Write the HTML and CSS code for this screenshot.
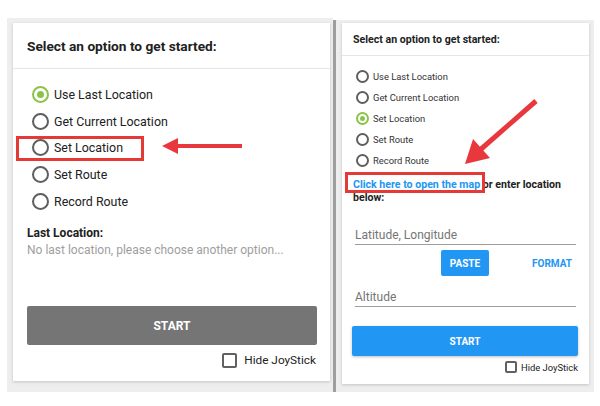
FILE: index.html
```html
<!DOCTYPE html>
<html lang="en">
<head>
    <meta charset="UTF-8">
    <meta name="viewport" content="width=device-width, initial-scale=1.0">
    <title>Set Location Guide</title>
    <link rel="stylesheet" href="styles.css">
</head>
<body>
    <div class="shots">
        <div class="panel panel-left">
            <div class="card">
                <div class="card-header">Select an option to get started:</div>
                <div class="options">
                    <div class="option"><span class="radio checked"></span>Use Last Location</div>
                    <div class="option"><span class="radio"></span>Get Current Location</div>
                    <div class="option"><span class="radio"></span>Set Location</div>
                    <div class="option"><span class="radio"></span>Set Route</div>
                    <div class="option"><span class="radio"></span>Record Route</div>
                </div>
                <div class="last-title">Last Location:</div>
                <div class="last-text">No last location, please choose another option...</div>
                <div class="spacer"></div>
                <button class="start start-gray">START</button>
                <div class="joystick"><span class="check"></span>Hide JoyStick</div>
            </div>
        </div>
        <div class="divider"></div>
        <div class="panel panel-right">
            <div class="card">
                <div class="card-header">Select an option to get started:</div>
                <div class="options">
                    <div class="option"><span class="radio"></span>Use Last Location</div>
                    <div class="option"><span class="radio"></span>Get Current Location</div>
                    <div class="option"><span class="radio checked"></span>Set Location</div>
                    <div class="option"><span class="radio"></span>Set Route</div>
                    <div class="option"><span class="radio"></span>Record Route</div>
                </div>
                <div class="map-line"><span class="map-link">Click here to open the map</span> or enter location below:</div>
                <div class="field">Latitude, Longitude</div>
                <div class="field-actions">
                    <button class="paste">PASTE</button>
                    <span class="format">FORMAT</span>
                </div>
                <div class="field field-alt">Altitude</div>
                <button class="start start-blue">START</button>
                <div class="joystick"><span class="check"></span>Hide JoyStick</div>
            </div>
        </div>
    </div>

    <!-- annotations -->
    <div class="mark mark-left"></div>
    <div class="mark mark-right"></div>
    <svg class="arrows" width="600" height="406" viewBox="0 0 600 406">
        <line x1="242" y1="146" x2="176" y2="146" stroke="#e8383d" stroke-width="4"/>
        <polygon points="162,146 178,138 178,154" fill="#e8383d"/>
        <line x1="536" y1="101" x2="480" y2="150" stroke="#e8383d" stroke-width="5"/>
        <polygon points="465,164 473,139 490,158" fill="#e8383d"/>
    </svg>
</body>
</html>
```

FILE: styles.css
```css
body {
    margin: 0;
    background: #fff;
    font-family: Roboto, "Liberation Sans", sans-serif;
    color: #212121;
    position: relative;
    width: 600px;
    height: 406px;
    overflow: hidden;
}
.shots {
    display: flex;
    align-items: flex-start;
    padding: 18px 0 0 7px;
}
.panel {
    background: #eeeeee;
    display: flex;
}
.panel-left {
    width: 326px;
    height: 374px;
    box-sizing: border-box;
    padding: 5px 3px 11px 6px;
}
.divider {
    width: 3px;
    height: 372px;
    margin-top: 2px;
    background: #9e9e9e;
}
.panel-right {
    width: 258px;
    height: 372px;
    margin-top: 2px;
    box-sizing: border-box;
    padding: 3px 5px 8px 6px;
}
.card {
    flex: 1;
    background: #fff;
    display: flex;
    flex-direction: column;
    box-shadow: 0 1px 3px rgba(0,0,0,0.18);
}
.card-header {
    font-weight: bold;
    border-bottom: 1px solid #e6e6e6;
}
.option {
    display: flex;
    align-items: center;
}
.radio {
    box-sizing: border-box;
    border: 2px solid #5f5f5f;
    border-radius: 50%;
    position: relative;
    flex: none;
}
.radio.checked {
    border-color: #8bc34a;
}
.radio.checked::after {
    content: "";
    position: absolute;
    inset: 2px;
    border-radius: 50%;
    background: #8bc34a;
}
.start {
    border: none;
    color: #fff;
    font-family: inherit;
    font-weight: bold;
    border-radius: 2px;
}
.joystick {
    display: flex;
    align-items: center;
    justify-content: flex-end;
}
.check {
    box-sizing: border-box;
    border: 2px solid #616161;
    border-radius: 2px;
}

/* left screenshot */
.panel-left .card {
    padding: 0 13px 0 14px;
}
.panel-left .card-header {
    font-size: 13.7px;
    height: 45px;
    line-height: 46px;
    margin: 0 -13px 0 -14px;
    padding-left: 14px;
}
.panel-left .options {
    padding: 12px 0 0 5px;
}
.panel-left .option {
    height: 26.75px;
    font-size: 12.4px;
}
.panel-left .radio {
    width: 17px;
    height: 17px;
    margin-right: 5px;
}
.panel-left .radio.checked::after {
    inset: 3px;
}
.last-title {
    margin-top: 10px;
    font-weight: bold;
    font-size: 12px;
    line-height: 17px;
}
.last-text {
    color: #9e9e9e;
    font-size: 12px;
    line-height: 16px;
}
.spacer {
    flex: 1;
}
.start-gray {
    background: #757575;
    height: 39px;
    font-size: 12px;
}
.panel-left .joystick {
    height: 22px;
    margin: 4px 1px 10px 0;
    font-size: 11.8px;
}
.panel-left .check {
    width: 15px;
    height: 15px;
    margin-right: 7px;
}

/* right screenshot */
.panel-right .card {
    padding: 0 11px 0 10px;
}
.panel-right .card-header {
    font-size: 10.6px;
    height: 32px;
    line-height: 34px;
    margin: 0 -11px 0 -10px;
    padding-left: 11px;
}
.panel-right .options {
    padding: 10px 0 0 4px;
}
.panel-right .option {
    height: 21px;
    font-size: 9.4px;
    color: #333;
}
.panel-right .radio {
    width: 13px;
    height: 13px;
    margin-right: 4px;
}
.map-line {
    margin-top: 7px;
    font-size: 10.6px;
    font-weight: bold;
    line-height: 13px;
    padding-left: 1px;
}
.map-link {
    color: #2196f3;
}
.field {
    margin: 21px 2px 0 3px;
    height: 19px;
    line-height: 20px;
    font-size: 12px;
    color: #757575;
    border-bottom: 1px solid #9e9e9e;
}
.field-actions {
    display: flex;
    align-items: center;
    margin-top: 5px;
    height: 26px;
}
.paste {
    margin-left: 89px;
    width: 48px;
    height: 26px;
    border: none;
    border-radius: 2px;
    background: #2196f3;
    color: #fff;
    font-family: inherit;
    font-weight: bold;
    font-size: 10px;
}
.format {
    margin-left: auto;
    margin-right: 6px;
    color: #2196f3;
    font-weight: bold;
    font-size: 10px;
}
.field-alt {
    margin-top: 11px;
}
.start-blue {
    margin-top: 19px;
    background: #2196f3;
    height: 30px;
    font-size: 10px;
    box-shadow: 0 1px 3px rgba(0,0,0,0.25);
}
.panel-right .joystick {
    margin-top: 5px;
    height: 12px;
    font-size: 9.4px;
}
.panel-right .check {
    width: 12px;
    height: 12px;
    margin-right: 4px;
}

/* annotations over the screenshots */
.mark {
    position: absolute;
    border: 3px solid #e53935;
    box-sizing: border-box;
}
.mark-left {
    left: 16px;
    top: 136px;
    width: 128px;
    height: 25px;
}
.mark-right {
    left: 345px;
    top: 172px;
    width: 140px;
    height: 21px;
}
.arrows {
    position: absolute;
    left: 0;
    top: 0;
}
```
